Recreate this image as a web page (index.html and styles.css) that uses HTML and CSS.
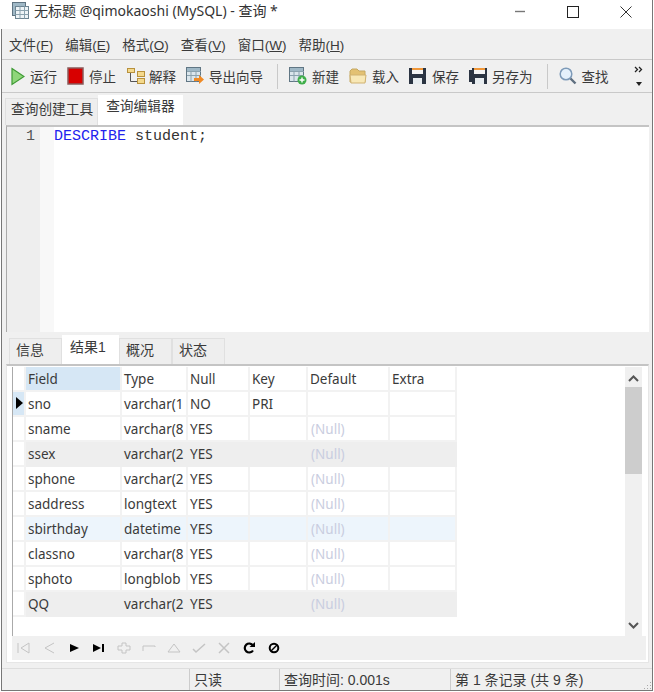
FILE: index.html
```html
<!DOCTYPE html>
<html lang="zh-CN">
<head>
    <meta charset="UTF-8">
    <title>无标题 @qimokaoshi (MySQL) - 查询 *</title>
    <link rel="stylesheet" href="styles.css">
</head>
<body>
<div class="window">
    <div class="titlebar">
        <svg class="app-icon" width="17" height="17" viewBox="0 0 17 17">
            <rect x="0.500" y="0.500" width="13" height="13" fill="#9fb8c6" stroke="#5f7482"/>
            <rect x="3.500" y="4.500" width="13" height="12" fill="#eef4f7" stroke="#6d8492"/>
            <path d="M3.500 8.500h13M3.500 12.500h13M8 4.500v12M12.500 4.500v12" stroke="#8ba2ae"/>
        </svg>
        <span class="title">无标题 @qimokaoshi (MySQL) - 查询 *</span>
        <div class="win-buttons">
            <svg width="12" height="12" viewBox="0 0 12 12"><path d="M1 5.500h10" stroke="#777" stroke-width="1.400"/></svg>
            <svg width="12" height="12" viewBox="0 0 12 12"><rect x="0.500" y="0.500" width="11" height="11" fill="none" stroke="#222"/></svg>
            <svg width="12" height="12" viewBox="0 0 12 12"><path d="M0.500 0.500l11 11M11.500 0.500l-11 11" stroke="#333"/></svg>
        </div>
    </div>

    <div class="menubar">
        <span>文件(<u>F</u>)</span>
        <span>编辑(<u>E</u>)</span>
        <span>格式(<u>O</u>)</span>
        <span>查看(<u>V</u>)</span>
        <span>窗口(<u>W</u>)</span>
        <span>帮助(<u>H</u>)</span>
    </div>

    <div class="toolbar">
        <div class="tool">
            <svg width="14" height="19" viewBox="0 0 14 19"><path d="M1 1.500L13 9.500 1 17.500z" fill="#8fd67a" stroke="#3e9a35" stroke-width="1.200"/></svg>
            <span>运行</span>
        </div>
        <div class="tool">
            <svg width="17" height="18" viewBox="0 0 17 18"><rect x="1" y="1" width="15" height="16" fill="#d80000" stroke="#8a5a5a" stroke-width="1.500"/></svg>
            <span>停止</span>
        </div>
        <div class="tool tool-narrow">
            <svg width="20" height="18" viewBox="0 0 20 18"><path d="M4.500 5v9.500h7" fill="none" stroke="#555"/><rect x="1.500" y="1.500" width="7" height="4" fill="#f4d98c" stroke="#b8913d"/><rect x="11.500" y="4.500" width="7" height="5" fill="#f4d98c" stroke="#b8913d"/><rect x="11.500" y="11.500" width="7" height="5" fill="#f4d98c" stroke="#b8913d"/></svg>
            <span>解释</span>
        </div>
        <div class="tool">
            <svg width="18" height="18" viewBox="0 0 18 18"><rect x="0.500" y="0.500" width="14" height="14" fill="#dbe6ec" stroke="#607684"/><path d="M1 1h13v3H1z" fill="#9fb8c6"/><path d="M1 4.500h14M1 8.500h14M5 4.500v10M10 4.500v10" stroke="#8ba2ae"/><path d="M8 11h5V8l5 4.500-5 4.500v-3H8z" fill="#f08a24"/></svg>
            <span>导出向导</span>
        </div>
        <i class="tool-sep"></i>
        <div class="tool">
            <svg width="18" height="18" viewBox="0 0 18 18"><rect x="0.500" y="0.500" width="14" height="14" fill="#dbe6ec" stroke="#607684"/><path d="M1 1h13v3H1z" fill="#9fb8c6"/><path d="M1 4.500h14M1 8.500h14M5 4.500v10M10 4.500v10" stroke="#8ba2ae"/><circle cx="13" cy="13" r="4.500" fill="#3fae4a"/><path d="M13 10.500v5M10.500 13h5" stroke="#fff" stroke-width="1.400"/></svg>
            <span>新建</span>
        </div>
        <div class="tool">
            <svg width="18" height="18" viewBox="0 0 18 18"><path d="M1 4l2-2h5l2 2h6v11H1z" fill="#e3c173" stroke="#c5a862"/><path d="M1 8h16l-1 8H2z" fill="#f8e8b6" stroke="#d0b272"/></svg>
            <span>载入</span>
        </div>
        <div class="tool tool-save">
            <svg width="17" height="18" viewBox="0 0 17 18"><path d="M0 1h17v16H0z" fill="#2b3442"/><rect x="3" y="1" width="11" height="2" fill="#f0983a"/><rect x="3" y="3" width="11" height="4" fill="#f4f4f4"/><rect x="4" y="11" width="9" height="6" fill="#e8edf0"/></svg>
            <span>保存</span>
        </div>
        <div class="tool">
            <svg width="18" height="18" viewBox="0 0 18 18"><path d="M0 3h3v12H0z" fill="#2b3442"/><path d="M3 1h15v16H3z" fill="#2b3442"/><rect x="5" y="1" width="11" height="2" fill="#f0983a"/><rect x="5" y="3" width="11" height="4" fill="#f4f4f4"/><rect x="6" y="11" width="9" height="6" fill="#e8edf0"/></svg>
            <span>另存为</span>
        </div>
        <i class="tool-sep"></i>
        <div class="tool">
            <svg width="18" height="18" viewBox="0 0 18 18"><circle cx="7" cy="7" r="5.800" fill="#e4f0fb" stroke="#7d9ab8" stroke-width="1.500"/><path d="M11.500 11.500l5 5" stroke="#5f6f80" stroke-width="2.400"/></svg>
            <span>查找</span>
        </div>
        <div class="tool-more">
            <svg width="10" height="7" viewBox="0 0 10 7"><path d="M1 1l2.500 2.500L1 6M5 1l2.500 2.500L5 6" fill="none" stroke="#222" stroke-width="1.300"/></svg>
            <svg width="6" height="4" viewBox="0 0 6 4"><path d="M0 0h6L3 4z" fill="#222"/></svg>
        </div>
    </div>

    <div class="tabs query-tabs">
        <div class="tab">查询创建工具</div>
        <div class="tab active">查询编辑器</div>
    </div>

    <div class="editor">
        <div class="gutter">1</div>
        <div class="code"><span class="kw">DESCRIBE</span> student;</div>
    </div>

    <div class="results">
        <div class="tabs result-tabs">
            <div class="tab">信息</div>
            <div class="tab active">结果1</div>
            <div class="tab">概况</div>
            <div class="tab">状态</div>
        </div>

        <div class="grid-panel">
            <div class="grid-wrap">
                <table class="grid">
                    <thead>
                        <tr><th class="mark"></th><th class="sel">Field</th><th>Type</th><th>Null</th><th>Key</th><th>Default</th><th>Extra</th></tr>
                    </thead>
                    <tbody>
                        <tr><td class="mark cur"><svg width="7" height="12" viewBox="0 0 7 12"><path d="M0 0l7 6-7 6z" fill="#000"/></svg></td><td>sno</td><td>varchar(1</td><td>NO</td><td>PRI</td><td></td><td></td></tr>
                        <tr><td class="mark"></td><td>sname</td><td>varchar(8</td><td>YES</td><td></td><td class="nul">(Null)</td><td></td></tr>
                        <tr class="alt"><td class="mark"></td><td>ssex</td><td>varchar(2</td><td>YES</td><td></td><td class="nul">(Null)</td><td></td></tr>
                        <tr><td class="mark"></td><td>sphone</td><td>varchar(2</td><td>YES</td><td></td><td class="nul">(Null)</td><td></td></tr>
                        <tr><td class="mark"></td><td>saddress</td><td>longtext</td><td>YES</td><td></td><td class="nul">(Null)</td><td></td></tr>
                        <tr class="hl"><td class="mark"></td><td>sbirthday</td><td>datetime</td><td>YES</td><td></td><td class="nul">(Null)</td><td></td></tr>
                        <tr><td class="mark"></td><td>classno</td><td>varchar(8</td><td>YES</td><td></td><td class="nul">(Null)</td><td></td></tr>
                        <tr><td class="mark"></td><td>sphoto</td><td>longblob</td><td>YES</td><td></td><td class="nul">(Null)</td><td></td></tr>
                        <tr class="alt"><td class="mark"></td><td>QQ</td><td>varchar(2</td><td>YES</td><td></td><td class="nul">(Null)</td><td></td></tr>
                    </tbody>
                </table>
                <div class="scrollbar">
                    <svg width="11" height="7" viewBox="0 0 11 7"><path d="M1 6l4.500-4.500L10 6" fill="none" stroke="#555" stroke-width="2"/></svg>
                    <div class="thumb"></div>
                    <svg class="down" width="11" height="7" viewBox="0 0 11 7"><path d="M1 1l4.500 4.500L10 1" fill="none" stroke="#555" stroke-width="2"/></svg>
                </div>
            </div>
            <div class="navbar">
                <svg width="14" height="12" viewBox="0 0 14 12"><path d="M1 1v10M12 1L4 6l8 5z" fill="none" stroke="#c4c4c4"/></svg>
                <svg width="14" height="12" viewBox="0 0 14 12"><path d="M12 1L3 6l9 5" fill="none" stroke="#c4c4c4"/></svg>
                <svg width="14" height="12" viewBox="0 0 14 12"><path d="M3 2l9 4-9 4z" fill="#000"/></svg>
                <svg width="14" height="12" viewBox="0 0 14 12"><path d="M1 2l8 4-8 4zM10 2h2v8h-2z" fill="#000"/></svg>
                <svg width="14" height="12" viewBox="0 0 14 12"><path d="M5 1h4v3h4v4H9v3H5V8H1V4h4z" fill="none" stroke="#c4c4c4"/></svg>
                <svg width="14" height="12" viewBox="0 0 14 12"><path d="M1 4h12v1M1 4v5" fill="none" stroke="#c4c4c4"/></svg>
                <svg width="14" height="12" viewBox="0 0 14 12"><path d="M7 2l6 8H1z" fill="none" stroke="#c4c4c4"/></svg>
                <svg width="14" height="12" viewBox="0 0 14 12"><path d="M1 7l3 3 9-8" fill="none" stroke="#c4c4c4" stroke-width="1.500"/></svg>
                <svg width="14" height="12" viewBox="0 0 14 12"><path d="M2 1l10 10M12 1L2 11" fill="none" stroke="#c4c4c4" stroke-width="1.500"/></svg>
                <svg width="14" height="12" viewBox="0 0 14 12"><path d="M11 8.500a4.500 4.500 0 1 1 0-5" fill="none" stroke="#000" stroke-width="2.200"/><path d="M7.500 5h5.500V0z" fill="#000"/></svg>
                <svg width="14" height="12" viewBox="0 0 14 12"><circle cx="7" cy="6" r="4.300" fill="none" stroke="#000" stroke-width="2"/><path d="M4 9l6-6" stroke="#000" stroke-width="1.500"/></svg>
            </div>
        </div>
    </div>

    <div class="statusbar">
        <div class="st-empty"></div>
        <div class="st-read">只读</div>
        <div class="st-time">查询时间: 0.001s</div>
        <div class="st-rec">第 1 条记录 (共 9 条)</div>
        <svg class="grip" width="10" height="10" viewBox="0 0 10 10"><path d="M8 2h1v1H8zM5 5h1v1H5zM8 5h1v1H8zM2 8h1v1H2zM5 8h1v1H5zM8 8h1v1H8z" fill="#aaa"/></svg>
    </div>
</div>
</body>
</html>
```

FILE: styles.css
```css
/* Navicat style query window */
html, body {
    margin: 0;
    padding: 0;
    height: 692px;
    overflow: hidden;
    background-color: #fff;
}
body {
    font-family: "Liberation Sans", "Noto Sans CJK SC", sans-serif;
    font-size: 14px;
    color: #3a3a3a;
}
.window {
    box-sizing: border-box;
    width: 652px;
    height: 691px;
    margin-left: 1px;
    border: 1px solid #777;
    border-top: none;
    background-color: #f0f0f0;
    display: flex;
    flex-direction: column;
}

/* Title bar */
.titlebar {
    height: 29px;
    flex: none;
    margin-left: -1px;
    background-color: #fff;
    display: flex;
    align-items: flex-start;
    padding: 2px 0 0 11px;
    box-sizing: border-box;
}
.title {
    margin-left: 5px;
    font-family: "Noto Sans", "Noto Sans CJK SC", sans-serif;
    font-size: 14px;
    line-height: 18px;
    color: #333;
}
.win-buttons {
    margin-left: auto;
    display: flex;
    gap: 41px;
    padding: 4px 20px 0 0;
}

/* Menu */
.menubar {
    height: 31px;
    flex: none;
    display: flex;
    align-items: center;
    gap: 12px;
    padding-left: 7px;
    border-bottom: 1px solid #c9c9c9;
    box-sizing: border-box;
    font-size: 13.500px;
}

/* Toolbar */
.toolbar {
    height: 33px;
    flex: none;
    display: flex;
    align-items: center;
    padding-left: 9px;
    border-bottom: 1px solid #c9c9c9;
    box-sizing: border-box;
    font-size: 13.500px;
}
.tool {
    display: flex;
    align-items: center;
    gap: 5px;
    margin-right: 10px;
    white-space: nowrap;
}
.tool-narrow {
    gap: 3px;
}
.tool-save {
    gap: 6px;
}
.tool-sep {
    width: 1px;
    height: 25px;
    background-color: #c9c9c9;
    margin: 0 11px 0 4px;
}
.tool-more {
    margin-left: auto;
    margin-right: 8px;
    display: flex;
    flex-direction: column;
    align-items: center;
    gap: 9px;
}

/* Tabs */
.tabs {
    display: flex;
    align-items: flex-end;
    flex: none;
}
.tab {
    box-sizing: border-box;
    background-color: #eee;
    border: 1px solid #e0e0e0;
    border-bottom: none;
}
.tab.active {
    background-color: #fff;
    border-color: #fff;
}
.query-tabs {
    height: 32px;
    padding-left: 3px;
    box-sizing: border-box;
    font-size: 13.700px;
}
.query-tabs .tab {
    height: 27px;
    line-height: 21px;
    padding: 0 4px 0 5px;
}
.query-tabs .tab.active {
    height: 30px;
    line-height: 22px;
    padding: 0 7px;
}
.result-tabs {
    height: 32px;
    padding-left: 3px;
}
.result-tabs .tab {
    box-sizing: border-box;
    width: 53px;
    height: 26px;
    line-height: 22px;
    padding-left: 6px;
}
.result-tabs .tab.active {
    width: 57px;
    height: 29px;
    line-height: 23px;
    padding-left: 7px;
}

/* SQL editor */
.editor {
    height: 205px;
    flex: none;
    margin: 0 3px 0 4px;
    background-color: #fff;
    border-top: 2px solid #c4c4c4;
    border-left: 1px solid #aaa;
    display: flex;
    font-family: "Liberation Mono", monospace;
    font-size: 15px;
    line-height: 18px;
}
.gutter {
    width: 47px;
    background: linear-gradient(to right, #eeeeee 33px, #f8f8f8 33px);
    text-align: right;
    padding: 1px 19px 0 0;
    box-sizing: border-box;
    color: #555;
}
.code {
    padding: 1px 0 0 0;
    color: #333;
}
.kw {
    color: #2222ee;
}

/* Results */
.results {
    flex: 1;
    min-height: 0;
    display: flex;
    flex-direction: column;
    margin: 0 3px 5px 4px;
}
.grid-panel {
    flex: 1;
    border: 1px solid #e6e6e6;
    border-top: 2px solid #c4c4c4;
    background-color: #fff;
    padding: 1px 2px 2px 5px;
    display: flex;
    flex-direction: column;
    min-height: 0;
}
.grid-wrap {
    flex: 1;
    display: flex;
    justify-content: space-between;
    border-left: 1px solid #aaa;
    min-height: 0;
}
.grid {
    border-collapse: collapse;
    table-layout: fixed;
    width: 443px;
    height: 249px;
    font-family: "Noto Sans", "Liberation Sans", sans-serif;
    font-size: 13.500px;
}
.grid th, .grid td {
    box-sizing: border-box;
    height: 25px;
    padding: 0 0 0 2px;
    text-align: left;
    font-weight: normal;
    background-color: #fff;
    border-right: 2px solid #f2f2f2;
    border-bottom: 2px solid #f2f2f2;
    white-space: nowrap;
    overflow: hidden;
}
.grid th { height: 24px; }
.grid th:nth-child(1) { width: 12px; padding: 0; }
.grid th:nth-child(2) { width: 96px; }
.grid th:nth-child(3) { width: 66px; }
.grid th:nth-child(4) { width: 62px; }
.grid th:nth-child(5) { width: 58px; }
.grid th:nth-child(6) { width: 82px; }
.grid th:nth-child(7) { width: 67px; }
.grid th.sel { background-color: #d6e7f5; }
.grid td.mark { padding: 0 0 0 3px; background-color: #fff; }
.grid td.cur { background-color: #d6e7f5; }
.grid .alt td:not(.mark) { background-color: #eeeeee; border-color: #eeeeee; }
.grid .hl td:not(.mark) { background-color: #edf5fc; }
.grid td.nul { color: #c9cde0; padding-left: 3px; }

.scrollbar {
    width: 17px;
    margin-right: 4px;
    background-color: #f0f0f0;
    display: flex;
    flex-direction: column;
    align-items: center;
    padding-top: 8px;
}
.thumb {
    width: 100%;
    height: 87px;
    margin-top: 5px;
    background-color: #cdcdcd;
}
.scrollbar .down {
    margin-top: auto;
    margin-bottom: 7px;
}
.navbar {
    height: 24px;
    flex: none;
    background-color: #f0f0f0;
    display: flex;
    align-items: center;
    gap: 11px;
    padding-left: 5px;
}

/* Status bar */
.statusbar {
    height: 22px;
    flex: none;
    display: flex;
    position: relative;
    border-top: 1px solid #ddd;
    box-sizing: border-box;
    font-size: 14px;
    line-height: 22px;
}
.statusbar div {
    box-sizing: border-box;
    padding-left: 4px;
    border-left: 1px solid #ccc;
}
.statusbar .st-empty { width: 187px; border-left: none; }
.st-read { width: 90px; }
.st-time { width: 171px; }
.st-rec { flex: 1; }
.grip {
    position: absolute;
    right: 0;
    bottom: 0;
}
```
